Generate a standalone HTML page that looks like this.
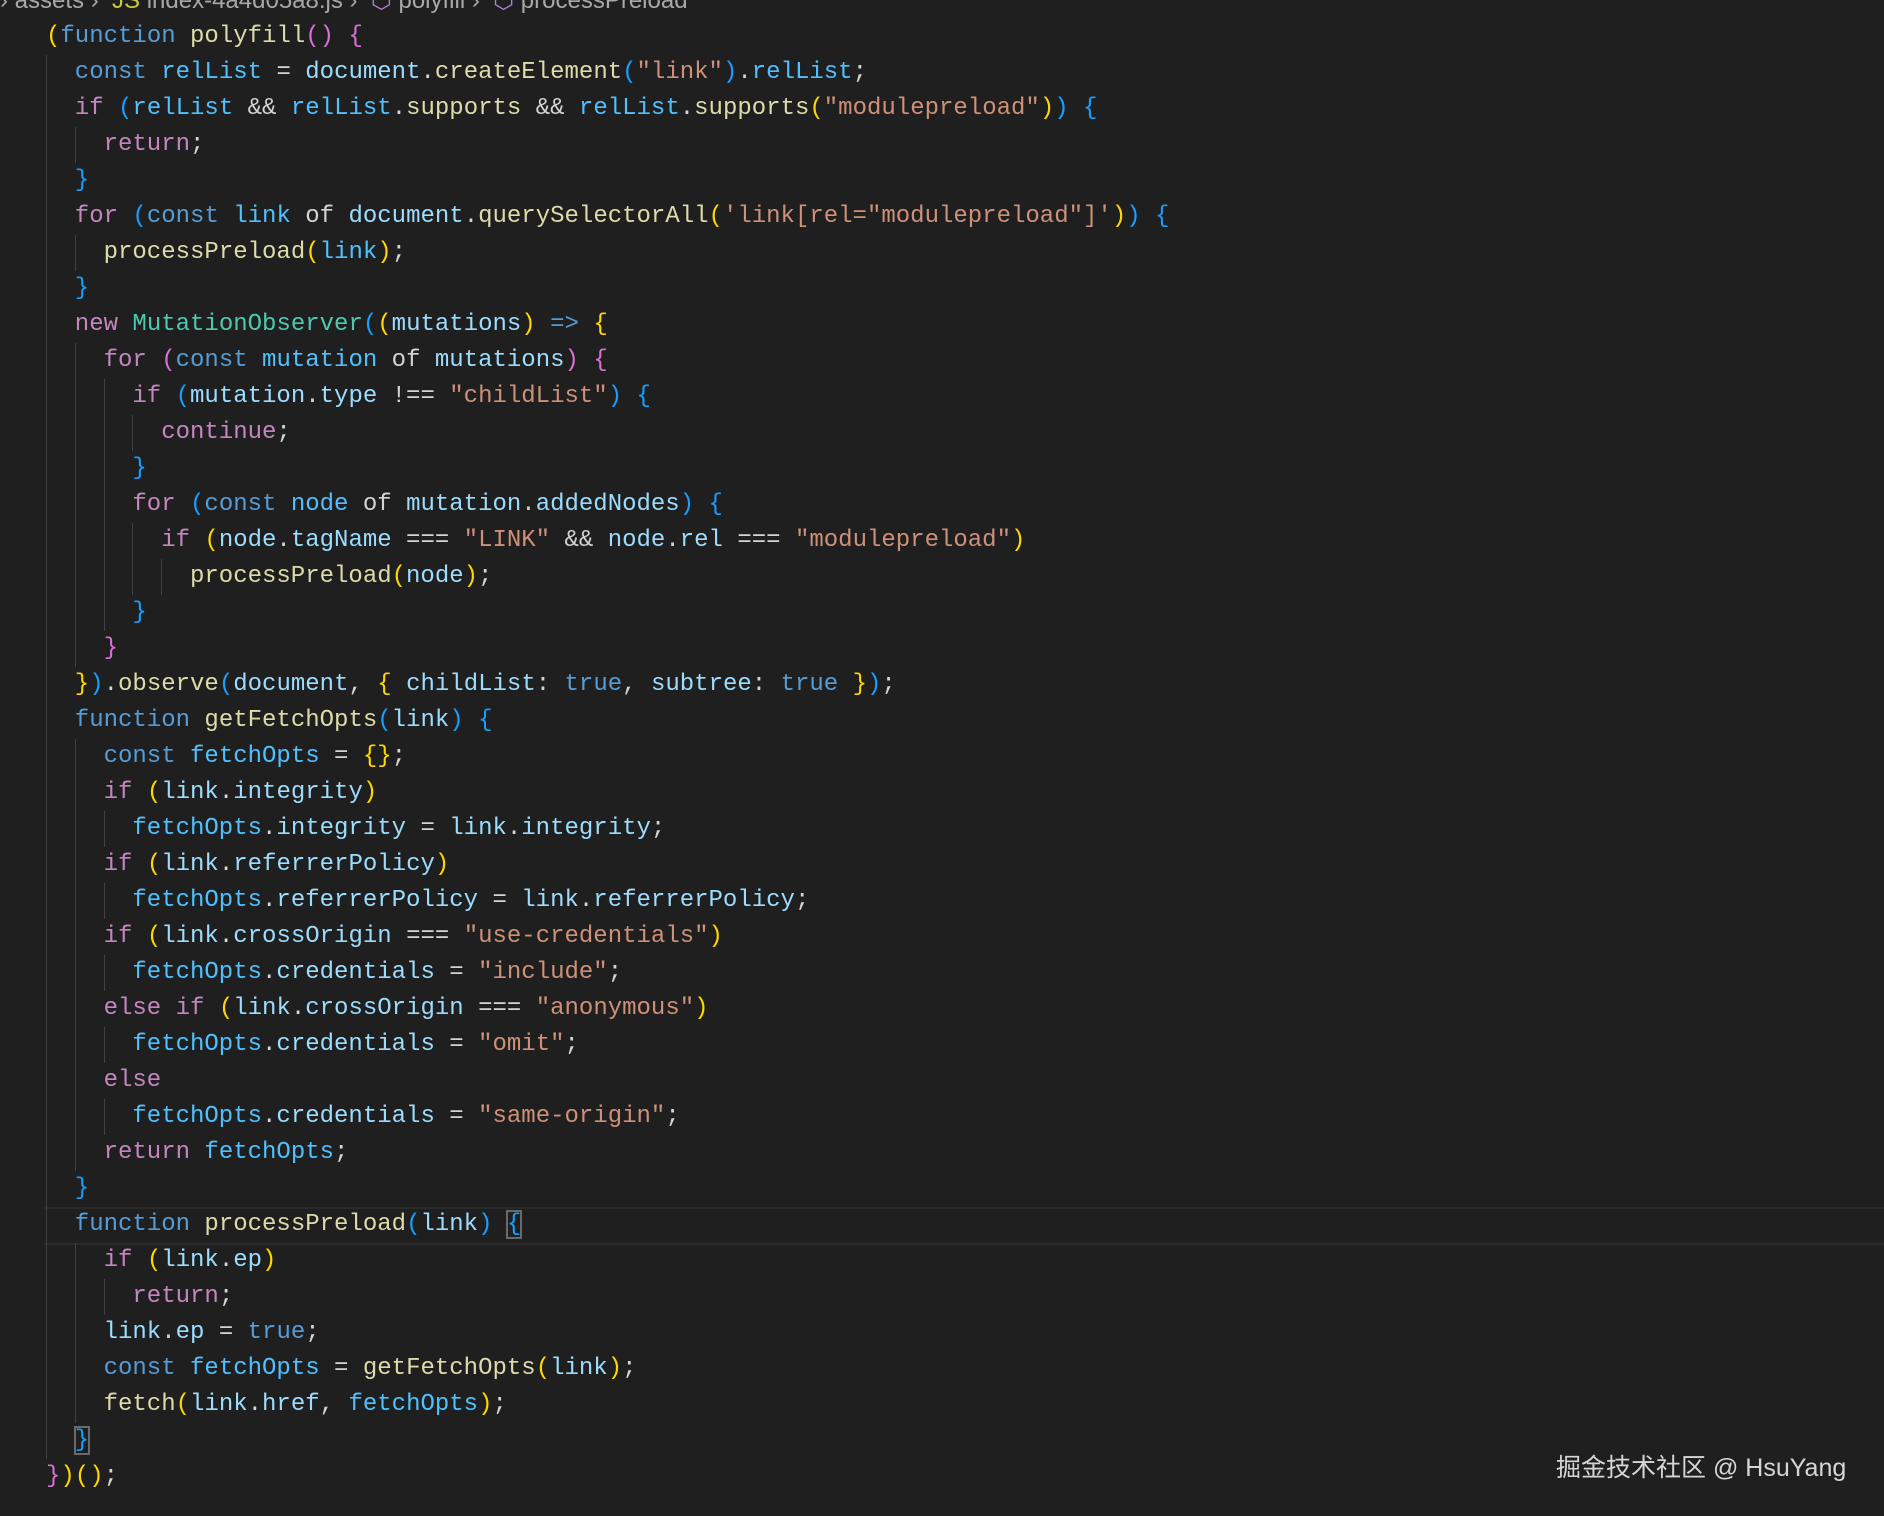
<!DOCTYPE html>
<html><head><meta charset="utf-8"><style>
html,body{margin:0;padding:0;background:#1f1f1f;width:1884px;height:1516px;overflow:hidden}
#code{position:absolute;left:46px;top:19px;font-family:"Liberation Mono",monospace;font-size:24px;line-height:36px;color:#d4d4d4}
.l{height:36px;white-space:pre}
i{display:inline-block;width:28.8px;height:36px;vertical-align:top;box-shadow:inset 1px 0 #404040}
.k{color:#569cd6}.c{color:#c586c0}.f{color:#dcdcaa}.v{color:#9cdcfe}.n{color:#4fc1ff}.s{color:#ce9178}.t{color:#4ec9b0}
.b0{color:#ffd700}.b1{color:#da70d6}.b2{color:#179fff}
.cur{position:absolute;left:44px;right:0;top:1207px;height:34px;border-top:2px solid #2a2a2a;border-bottom:2px solid #2a2a2a}
.box{outline:2px solid #6a6a6a;outline-offset:-1px}
#bc{position:absolute;left:0;top:-14px;font-family:"Liberation Sans",sans-serif;font-size:24px;color:#a8a8a8;white-space:pre}
#wm{position:absolute;left:1556px;top:1448px;font-family:"Liberation Sans","Noto Sans CJK SC",sans-serif;font-size:25px;color:#d6d6d6}
</style></head><body>
<div id="bc">› assets ›  <span style="color:#cbcb41">JS</span> index-4a4d05a8.js ›  <span style="color:#b180d7">⬡</span> polyfill ›  <span style="color:#b180d7">⬡</span> processPreload</div>
<div class="cur"></div>
<div id="code">
<div class="l"><span class="b0">(</span><span class="k">function</span> <span class="f">polyfill</span><span class="b1">()</span> <span class="b1">{</span></div>
<div class="l"><i></i><span class="k">const</span> <span class="n">relList</span> = <span class="v">document</span>.<span class="f">createElement</span><span class="b2">(</span><span class="s">"link"</span><span class="b2">)</span>.<span class="n">relList</span>;</div>
<div class="l"><i></i><span class="c">if</span> <span class="b2">(</span><span class="n">relList</span> &amp;&amp; <span class="n">relList</span>.<span class="f">supports</span> &amp;&amp; <span class="n">relList</span>.<span class="f">supports</span><span class="b0">(</span><span class="s">"modulepreload"</span><span class="b0">)</span><span class="b2">)</span> <span class="b2">{</span></div>
<div class="l"><i></i><i></i><span class="c">return</span>;</div>
<div class="l"><i></i><span class="b2">}</span></div>
<div class="l"><i></i><span class="c">for</span> <span class="b2">(</span><span class="k">const</span> <span class="n">link</span> of <span class="v">document</span>.<span class="f">querySelectorAll</span><span class="b0">(</span><span class="s">'link[rel="modulepreload"]'</span><span class="b0">)</span><span class="b2">)</span> <span class="b2">{</span></div>
<div class="l"><i></i><i></i><span class="f">processPreload</span><span class="b0">(</span><span class="n">link</span><span class="b0">)</span>;</div>
<div class="l"><i></i><span class="b2">}</span></div>
<div class="l"><i></i><span class="c">new</span> <span class="t">MutationObserver</span><span class="b2">(</span><span class="b0">(</span><span class="v">mutations</span><span class="b0">)</span> <span class="k">=&gt;</span> <span class="b0">{</span></div>
<div class="l"><i></i><i></i><span class="c">for</span> <span class="b1">(</span><span class="k">const</span> <span class="n">mutation</span> of <span class="v">mutations</span><span class="b1">)</span> <span class="b1">{</span></div>
<div class="l"><i></i><i></i><i></i><span class="c">if</span> <span class="b2">(</span><span class="v">mutation</span>.<span class="v">type</span> !== <span class="s">"childList"</span><span class="b2">)</span> <span class="b2">{</span></div>
<div class="l"><i></i><i></i><i></i><i></i><span class="c">continue</span>;</div>
<div class="l"><i></i><i></i><i></i><span class="b2">}</span></div>
<div class="l"><i></i><i></i><i></i><span class="c">for</span> <span class="b2">(</span><span class="k">const</span> <span class="n">node</span> of <span class="v">mutation</span>.<span class="v">addedNodes</span><span class="b2">)</span> <span class="b2">{</span></div>
<div class="l"><i></i><i></i><i></i><i></i><span class="c">if</span> <span class="b0">(</span><span class="v">node</span>.<span class="v">tagName</span> === <span class="s">"LINK"</span> &amp;&amp; <span class="v">node</span>.<span class="v">rel</span> === <span class="s">"modulepreload"</span><span class="b0">)</span></div>
<div class="l"><i></i><i></i><i></i><i></i><i></i><span class="f">processPreload</span><span class="b0">(</span><span class="v">node</span><span class="b0">)</span>;</div>
<div class="l"><i></i><i></i><i></i><span class="b2">}</span></div>
<div class="l"><i></i><i></i><span class="b1">}</span></div>
<div class="l"><i></i><span class="b0">}</span><span class="b2">)</span>.<span class="f">observe</span><span class="b2">(</span><span class="v">document</span>, <span class="b0">{</span> <span class="v">childList</span>: <span class="k">true</span>, <span class="v">subtree</span>: <span class="k">true</span> <span class="b0">}</span><span class="b2">)</span>;</div>
<div class="l"><i></i><span class="k">function</span> <span class="f">getFetchOpts</span><span class="b2">(</span><span class="v">link</span><span class="b2">)</span> <span class="b2">{</span></div>
<div class="l"><i></i><i></i><span class="k">const</span> <span class="n">fetchOpts</span> = <span class="b0">{}</span>;</div>
<div class="l"><i></i><i></i><span class="c">if</span> <span class="b0">(</span><span class="v">link</span>.<span class="v">integrity</span><span class="b0">)</span></div>
<div class="l"><i></i><i></i><i></i><span class="n">fetchOpts</span>.<span class="v">integrity</span> = <span class="v">link</span>.<span class="v">integrity</span>;</div>
<div class="l"><i></i><i></i><span class="c">if</span> <span class="b0">(</span><span class="v">link</span>.<span class="v">referrerPolicy</span><span class="b0">)</span></div>
<div class="l"><i></i><i></i><i></i><span class="n">fetchOpts</span>.<span class="v">referrerPolicy</span> = <span class="v">link</span>.<span class="v">referrerPolicy</span>;</div>
<div class="l"><i></i><i></i><span class="c">if</span> <span class="b0">(</span><span class="v">link</span>.<span class="v">crossOrigin</span> === <span class="s">"use-credentials"</span><span class="b0">)</span></div>
<div class="l"><i></i><i></i><i></i><span class="n">fetchOpts</span>.<span class="v">credentials</span> = <span class="s">"include"</span>;</div>
<div class="l"><i></i><i></i><span class="c">else if</span> <span class="b0">(</span><span class="v">link</span>.<span class="v">crossOrigin</span> === <span class="s">"anonymous"</span><span class="b0">)</span></div>
<div class="l"><i></i><i></i><i></i><span class="n">fetchOpts</span>.<span class="v">credentials</span> = <span class="s">"omit"</span>;</div>
<div class="l"><i></i><i></i><span class="c">else</span></div>
<div class="l"><i></i><i></i><i></i><span class="n">fetchOpts</span>.<span class="v">credentials</span> = <span class="s">"same-origin"</span>;</div>
<div class="l"><i></i><i></i><span class="c">return</span> <span class="n">fetchOpts</span>;</div>
<div class="l"><i></i><span class="b2">}</span></div>
<div class="l"><i></i><span class="k">function</span> <span class="f">processPreload</span><span class="b2">(</span><span class="v">link</span><span class="b2">)</span> <span class="b2 box">{</span></div>
<div class="l"><i></i><i></i><span class="c">if</span> <span class="b0">(</span><span class="v">link</span>.<span class="v">ep</span><span class="b0">)</span></div>
<div class="l"><i></i><i></i><i></i><span class="c">return</span>;</div>
<div class="l"><i></i><i></i><span class="v">link</span>.<span class="v">ep</span> = <span class="k">true</span>;</div>
<div class="l"><i></i><i></i><span class="k">const</span> <span class="n">fetchOpts</span> = <span class="f">getFetchOpts</span><span class="b0">(</span><span class="v">link</span><span class="b0">)</span>;</div>
<div class="l"><i></i><i></i><span class="f">fetch</span><span class="b0">(</span><span class="v">link</span>.<span class="v">href</span>, <span class="n">fetchOpts</span><span class="b0">)</span>;</div>
<div class="l"><i></i><span class="b2 box">}</span></div>
<div class="l"><span class="b1">}</span><span class="b0">)()</span>;</div>
</div>
<div id="wm">掘金技术社区 @ HsuYang</div>
</body></html>
